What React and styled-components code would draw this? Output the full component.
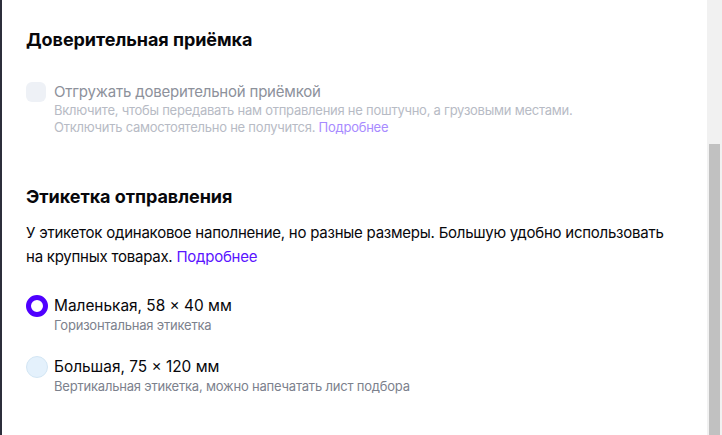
import React from 'react';
import styled, { createGlobalStyle } from 'styled-components';

const GlobalStyle = createGlobalStyle`
  html, body {
    margin: 0;
    padding: 0;
    background: #ffffff;
  }
  body {
    font-family: Inter, "Noto Sans", "Liberation Sans", sans-serif;
    color: #07070b;
  }
`;

const Page = styled.div`
  display: flex;
  width: 722px;
  height: 435px;
  overflow: hidden;
`;

const Panel = styled.div`
  flex: 1;
  border-left: 2px solid #2c2e3b;
  padding: 28px 24px 0 24px;
  display: flex;
  flex-direction: column;
`;

const Track = styled.div`
  width: 15px;
  background: #f1f1f1;
  display: flex;
  flex-direction: column;
  padding: 144px 2px 0 2px;
  box-sizing: border-box;
`;

const Thumb = styled.div`
  flex: 1;
  background: #c1c1c1;
`;

const Title = styled.h2`
  margin: 0;
  font-size: 18px;
  line-height: 24px;
  font-weight: 700;
  letter-spacing: -0.05px;
  margin-top: ${p => p.$top || 0}px;
`;

const CheckRow = styled.label`
  display: flex;
  align-items: center;
  gap: 8px;
  margin-top: 30px;
`;

const Checkbox = styled.span`
  width: 20px;
  height: 20px;
  border-radius: 6px;
  background: #eef1f6;
  flex-shrink: 0;
`;

const CheckLabel = styled.span`
  font-size: 15px;
  line-height: 20px;
  letter-spacing: -0.2px;
  color: #8d919b;
`;

const Hint = styled.p`
  margin: 0 0 0 28px;
  font-size: 13px;
  line-height: 17px;
  letter-spacing: -0.25px;
  color: ${p => (p.$muted ? '#b7bbc5' : '#808592')};
`;

const Link = styled.a`
  color: ${p => (p.$soft ? '#a88bff' : '#5a14ff')};
  text-decoration: none;
`;

const Text = styled.p`
  margin: 12px 0 0 0;
  font-size: 15px;
  line-height: 24px;
  letter-spacing: -0.24px;
`;

const Options = styled.div`
  display: flex;
  flex-direction: column;
  gap: 22px;
  margin-top: 26px;
`;

const Option = styled.div`
  display: grid;
  grid-template-columns: 22px 1fr;
  column-gap: 6px;
  align-items: center;
`;

const Radio = styled.span`
  width: 22px;
  height: 22px;
  border-radius: 50%;
  box-sizing: border-box;
  background: ${p => (p.$checked ? '#ffffff' : '#e4f1fc')};
  border: ${p => (p.$checked ? '5px solid #4f00ff' : '1px solid #d3e6f4')};
`;

const OptionLabel = styled.span`
  font-size: 15.4px;
  line-height: 20px;
`;

const OptionHint = styled.span`
  grid-column: 2;
  font-size: 13px;
  line-height: 17px;
  letter-spacing: -0.2px;
  color: #7c818d;
`;

const options = [
  { label: 'Маленькая, 58 × 40 мм', hint: 'Горизонтальная этикетка', checked: true },
  { label: 'Большая, 75 × 120 мм', hint: 'Вертикальная этикетка, можно напечатать лист подбора', checked: false },
];

const App = () => {
  return (
    <>
      <GlobalStyle />
      <Page>
        <Panel>
          <Title>Доверительная приёмка</Title>
          <CheckRow>
            <Checkbox />
            <CheckLabel>Отгружать доверительной приёмкой</CheckLabel>
          </CheckRow>
          <Hint $muted>
            Включите, чтобы передавать нам отправления не поштучно, а грузовыми местами.
            <br />
            Отключить самостоятельно не получится. <Link $soft href="#">Подробнее</Link>
          </Hint>

          <Title $top={49}>Этикетка отправления</Title>
          <Text>
            У этикеток одинаковое наполнение, но разные размеры. Большую удобно использовать
            <br />
            на крупных товарах. <Link href="#">Подробнее</Link>
          </Text>

          <Options>
            {options.map(o => (
              <Option key={o.label}>
                <Radio $checked={o.checked} />
                <OptionLabel>{o.label}</OptionLabel>
                <OptionHint>{o.hint}</OptionHint>
              </Option>
            ))}
          </Options>
        </Panel>
        <Track>
          <Thumb />
        </Track>
      </Page>
    </>
  );
};

export default App;
